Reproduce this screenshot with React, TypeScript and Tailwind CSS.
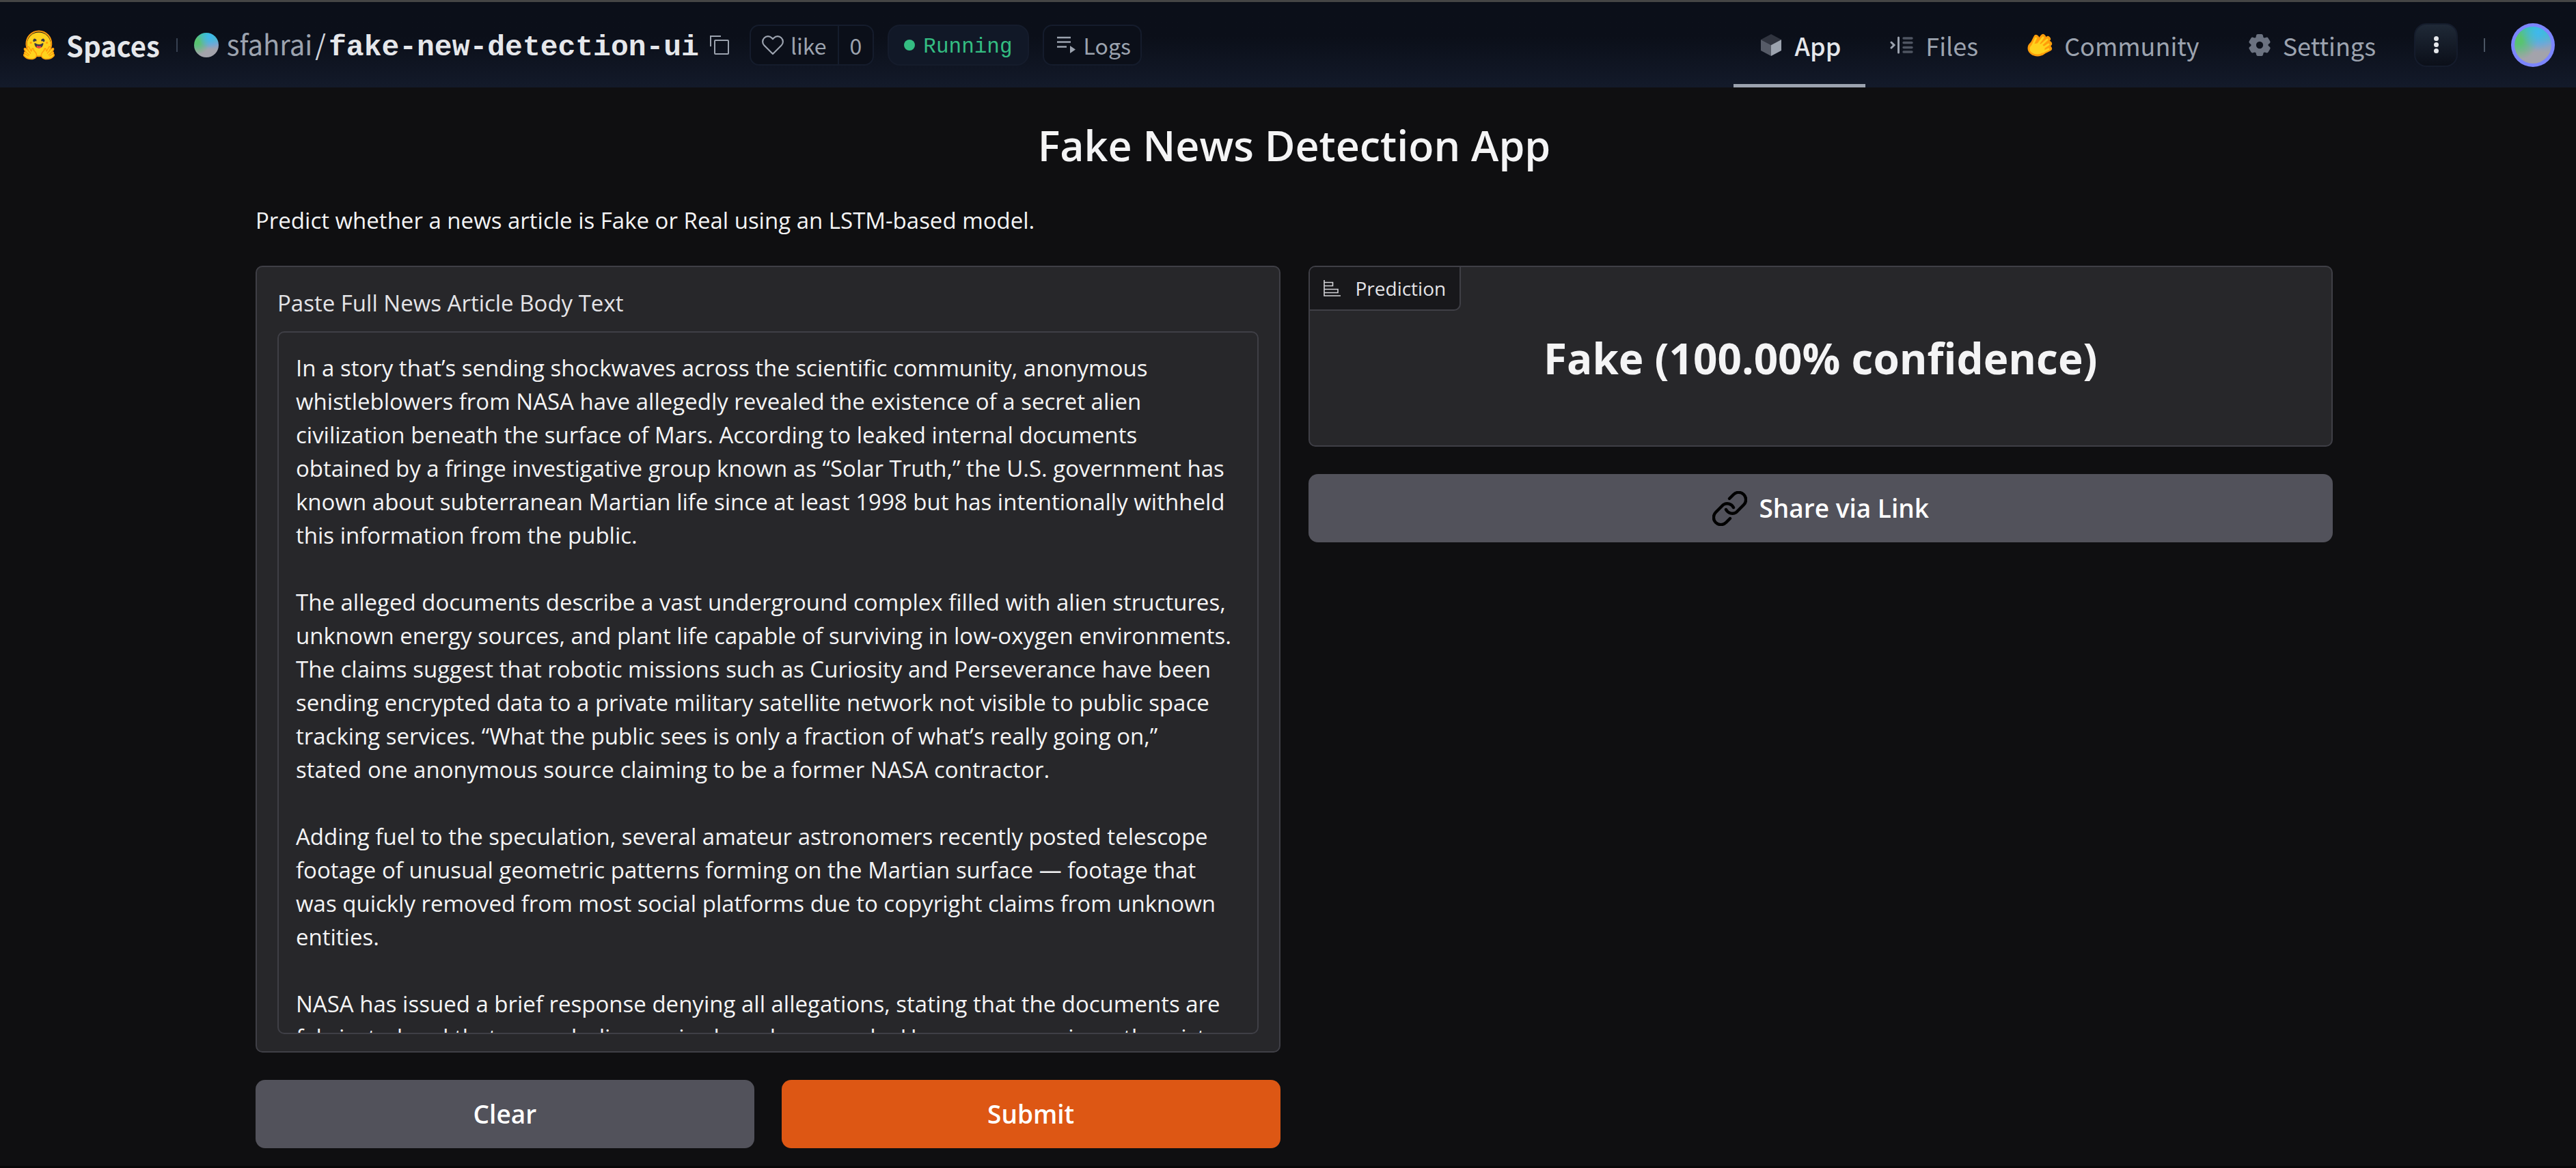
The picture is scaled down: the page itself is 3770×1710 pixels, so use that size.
import React from "react";

const article = `In a story that’s sending shockwaves across the scientific community, anonymous whistleblowers from NASA have allegedly revealed the existence of a secret alien civilization beneath the surface of Mars. According to leaked internal documents obtained by a fringe investigative group known as “Solar Truth,” the U.S. government has known about subterranean Martian life since at least 1998 but has intentionally withheld this information from the public.

The alleged documents describe a vast underground complex filled with alien structures, unknown energy sources, and plant life capable of surviving in low-oxygen environments. The claims suggest that robotic missions such as Curiosity and Perseverance have been sending encrypted data to a private military satellite network not visible to public space tracking services. “What the public sees is only a fraction of what’s really going on,”
stated one anonymous source claiming to be a former NASA contractor.

Adding fuel to the speculation, several amateur astronomers recently posted telescope footage of unusual geometric patterns forming on the Martian surface — footage that was quickly removed from most social platforms due to copyright claims from unknown entities.

NASA has issued a brief response denying all allegations, stating that the documents are fabricated and that no such discoveries have been made. However, conspiracy theorists remain unconvinced.`;

function HuggingLogo() {
  return (
    <svg viewBox="0 0 95 88" className="h-11 w-12" aria-hidden="true">
      <circle cx="47.2" cy="41.8" r="34.8" fill="#FFD21E" />
      <path d="M82 41.8a34.8 34.8 0 1 0-69.5 0 34.8 34.8 0 0 0 69.5 0Zm-73.5 0a38.8 38.8 0 1 1 77.5 0 38.8 38.8 0 0 1-77.5 0Z" fill="#FF9D0B" />
      <path d="M58.5 32.3c1.3.5 1.8 3.1 3.1 2.4a5 5 0 1 0-6.8-2c.6 1.1 2.5-.8 3.7-.4ZM35.9 32.3c-1.2.5-1.7 3.1-3 2.4a5 5 0 1 1 6.8-2c-.6 1.1-2.6-.8-3.8-.4Z" fill="#3A3B45" />
      <path d="M47.3 53c9.8 0 13-8.8 13-13.3 0-2.3-1.6-1.6-4.1-.3-2.4 1.1-5.5 2.7-8.9 2.7-7.1 0-13-6.9-13-2.4S37.4 53 47.3 53Z" fill="#3A3B45" />
      <path d="M39.5 50.2a8.7 8.7 0 0 1 5.3-4.5c.4-.1.8.6 1.2 1.3.4.7.8 1.3 1.2 1.3.5 0 .9-.6 1.3-1.3.4-.7.9-1.3 1.3-1.2a8.6 8.6 0 0 1 5 4.2C52.2 52.3 49.8 53 47.3 53c-3.1 0-5.7-.9-7.8-2.8Z" fill="#F94040" />
      <circle cx="70.7" cy="37" r="3.2" fill="#FF9D0B" />
      <circle cx="23.8" cy="37" r="3.2" fill="#FF9D0B" />
      <g fill="#FFD21E" stroke="#FF9D0B" strokeWidth="3" strokeLinejoin="round" strokeLinecap="round">
        <path d="M18 49c-3-1-5 1-4 5l3 7-8-7c-3-2-6 0-4 4l4 6c-3-1-5 1-4 4l1 2c-3 0-4 3-2 6 6 7 15 10 25 9 9-1 13-8 11-15-2-5-6-8-8-11 1-5-3-7-5-3l-2 6-7-13Z" />
        <path d="M77 49c3-1 5 1 4 5l-3 7 8-7c3-2 6 0 4 4l-4 6c3-1 5 1 4 4l-1 2c3 0 4 3 2 6-6 7-15 10-25 9-9-1-13-8-11-15 2-5 6-8 8-11-1-5 3-7 5-3l2 6 7-13Z" />
      </g>
      <path d="m17 61 6 7M9 64l10 9M7 70l9 6M78 61l-6 7M86 64l-10 9M88 70l-9 6" stroke="#FF9D0B" strokeWidth="2.5" strokeLinecap="round" fill="none" />
    </svg>
  );
}

function HandIcon() {
  return (
    <svg viewBox="0 0 38 34" className="h-[34px] w-[38px]" strokeLinecap="round" strokeLinejoin="round" aria-hidden="true">
      <g fill="#FF9D0B" stroke="#FF9D0B" strokeWidth="8">
        <ellipse cx="15" cy="21.5" rx="10.5" ry="8" />
        <path d="M8 16l5-10M15 15l8-10M20 18l10-10M24 21l8-6M24 26l8-4" />
      </g>
      <g fill="#FFD21E" stroke="#FFD21E" strokeWidth="3">
        <ellipse cx="14.5" cy="22.5" rx="9.5" ry="6.5" />
        <path d="M7 19l5.500-12M14 18l9-12M18 19l11-10M22 22l9-6M23 27l8-4" />
      </g>
    </svg>
  );
}

function CopyIcon() {
  return (
    <svg viewBox="0 0 28 28" className="size-7" fill="none" stroke="#9ca3af" strokeWidth="2" aria-hidden="true">
      <path d="M1 16V1h15" />
      <rect x="7" y="7" width="20" height="20" rx="1" />
    </svg>
  );
}

function HeartIcon() {
  return (
    <svg viewBox="0 0 32 30" className="h-[30px] w-8" fill="none" stroke="#9ca3af" strokeWidth="2.2" strokeLinejoin="round" aria-hidden="true">
      <path d="M16 28 3.500 15.500a7.600 7.600 0 0 1 0-11 7.600 7.600 0 0 1 10.900 0L16 6.200l1.600-1.700a7.600 7.600 0 0 1 10.900 0 7.600 7.600 0 0 1 0 11L16 28Z" />
    </svg>
  );
}

function LogsIcon() {
  return (
    <svg viewBox="0 0 28 26" className="h-[26px] w-7" aria-hidden="true">
      <path d="M1 2h20M1 8.500h20M1 15.500h14" stroke="#9ca3af" strokeWidth="2.4" fill="none" />
      <path d="M20 14v11l8-5.500-8-5.500Z" fill="#9ca3af" />
    </svg>
  );
}

function CubeIcon() {
  return (
    <svg viewBox="0 0 30 32" className="h-8 w-[30px]" aria-hidden="true">
      <path d="M15 0 30 8 15 16 0 8 15 0Z" fill="#30343f" />
      <path d="M0 8l15 8v16L0 24V8Z" fill="#565b67" />
      <path d="M30 8l-15 8v16l15-8V8Z" fill="#9ca3af" />
    </svg>
  );
}

function FilesIcon() {
  return (
    <svg viewBox="0 0 34 26" className="h-[26px] w-[34px]" fill="none" strokeLinecap="round" aria-hidden="true">
      <path d="M2 9l4 4-4 4" stroke="#9ca3af" strokeWidth="3" />
      <path d="M12.500 2v22" stroke="#9ca3af" strokeWidth="3" />
      <path d="M20 3h12M20 9.500h12M20 16.500h12M20 23h12" stroke="#4f5562" strokeWidth="3.4" />
    </svg>
  );
}

function GearIcon() {
  return (
    <svg viewBox="2 2 28 28" className="size-8" aria-hidden="true">
      <path
        d="M27 16.76v-1.53l1.92-1.68a2 2 0 0 0 .36-2.55l-2.36-4a2 2 0 0 0-1.73-1 2 2 0 0 0-.64.1l-2.43.82a11.35 11.35 0 0 0-1.31-.75l-.51-2.52a2 2 0 0 0-2-1.61h-4.68a2 2 0 0 0-2 1.61l-.51 2.52a11.48 11.48 0 0 0-1.32.75l-2.38-.86a2 2 0 0 0-.64-.06 2 2 0 0 0-1.73 1l-2.36 4a2 2 0 0 0 .41 2.51L5 15.24v1.53l-1.89 1.68a2 2 0 0 0-.39 2.55l2.36 4a2 2 0 0 0 1.73 1 2 2 0 0 0 .64-.1l2.43-.82a11.35 11.35 0 0 0 1.31.75l.51 2.52a2 2 0 0 0 2 1.61h4.72a2 2 0 0 0 2-1.61l.51-2.52a11.48 11.48 0 0 0 1.32-.75l2.42.82a2 2 0 0 0 .64.1 2 2 0 0 0 1.73-1l2.28-4a2 2 0 0 0-.41-2.51ZM16 20.5a4.5 4.5 0 1 1 0-9 4.5 4.5 0 0 1 0 9Z"
        fill="#6b7280"
      />
    </svg>
  );
}

function ChartIcon() {
  return (
    <svg viewBox="0 0 25 24" className="h-6 w-[25px]" fill="none" stroke="#d4d4d8" strokeWidth="1.6" aria-hidden="true">
      <path d="M1 0v23h24" />
      <path d="M1 3.500h12.500v5H1M1 13.500h20v5H1" />
    </svg>
  );
}

function LinkIcon() {
  return (
    <svg viewBox="0 0 51 51" className="size-[51px]" fill="none" stroke="#000" strokeWidth="4.4" strokeLinecap="round" aria-hidden="true">
      <path d="M25 11l6-6a10.500 10.500 0 0 1 15 15L35 31a10.500 10.500 0 0 1-15-4" />
      <path d="M26 40l-6 6A10.500 10.500 0 0 1 5 31l11-11a10.500 10.500 0 0 1 15 4" />
    </svg>
  );
}

const sphere =
  "bg-[radial-gradient(circle_at_65%_15%,#3fb8ee_0%,transparent_45%),radial-gradient(circle_at_12%_38%,#58c470_8%,transparent_48%),linear-gradient(180deg,#2cc9b0_0%,#7fa3cf_45%,#a3a3ab_70%)]";

export default function App() {
  return (
    <div className="flex min-h-screen flex-col border-b-3 border-[#070708] bg-[#0f0f11] font-['Open_Sans',sans-serif] text-[#f4f4f5]">
      <header className="flex h-32 items-stretch justify-between border-t-3 border-[#454545] bg-linear-to-b from-[#0b0f19] from-40% to-[#131a2a] pr-[31px] pl-[33px] font-['Noto_Sans_CJK_SC',sans-serif] text-[#9ca3af]">
        <div className="flex items-center">
          <a href="#spaces" className="flex items-center gap-4 text-[40px] font-bold text-[#e5e7eb]">
            <HuggingLogo />
            Spaces
          </a>
          <span className="mr-6 ml-6 h-5 w-0.5 bg-[#374151]" />
          <span className={`mr-3 size-9 rounded-full ${sphere}`} />
          <h1 className="flex items-baseline pt-1.5 text-[40px]">
            <a href="#owner">sfahrai</a>
            <span className="mx-1 text-[#d1d5db]">/</span>
            <a href="#space" className="font-['Liberation_Mono',monospace] text-[43px] font-bold text-[#e5e7eb]">
              fake-new-detection-ui
            </a>
          </h1>
          <button type="button" aria-label="Copy" className="mr-[30px] ml-4">
            <CopyIcon />
          </button>
          <div className="mr-5 flex h-[60px] items-stretch rounded-[14px] border-2 border-[#151c2c] bg-[#0b0f19] text-[32px]">
            <button type="button" className="flex items-center gap-2.5 border-r-2 border-[#151c2c] px-4">
              <HeartIcon />
              like
            </button>
            <button type="button" className="px-4">0</button>
          </div>
          <button type="button" className="mr-5 flex h-[60px] items-center gap-3 rounded-[18px] border-2 border-[#151c2c] bg-[#111827] px-[22px] font-['Liberation_Mono',monospace] text-[31px] text-[#34bd82]">
            <span className="size-4 rounded-full bg-[#34bd82]" />
            <span className="pt-2">Running</span>
          </button>
          <button type="button" className="flex h-[60px] items-center gap-3 rounded-[14px] border-2 border-[#151c2c] bg-[#0b0f19] pr-[14px] pl-[18px] text-[32px]">
            <LogsIcon />
            Logs
          </button>
        </div>
        <nav className="flex items-stretch text-[36px]">
          <a href="#app" className="flex items-center gap-5 border-y-5 border-t-transparent border-b-[#9ca3af] pr-9 pl-10 font-medium text-[#e5e7eb]">
            <CubeIcon />
            App
          </a>
          <a href="#files" className="flex items-center gap-[18px] px-9">
            <FilesIcon />
            Files
          </a>
          <a href="#community" className="flex items-center gap-4 px-9">
            <HandIcon />
            Community
          </a>
          <a href="#settings" className="flex items-center gap-[18px] px-9">
            <GearIcon />
            Settings
          </a>
          <div className="flex items-center pl-5">
            <button type="button" aria-label="More" className="flex size-16 flex-col items-center justify-center gap-0.5 rounded-[18px] border-2 border-[#151c2c] bg-linear-to-b from-[#1f2937] to-[#0b0f19]">
              <span className="size-[7px] rounded-full bg-[#e5e7eb]" />
              <span className="size-[7px] rounded-full bg-[#e5e7eb]" />
              <span className="size-[7px] rounded-full bg-[#e5e7eb]" />
            </button>
            <span className="mx-[38px] h-5 w-0.5 bg-[#4b5563]" />
            <button type="button" aria-label="Account" className="size-16 rounded-full bg-[#7c86ff] p-[5px]">
              <span className={`block size-full rounded-full ${sphere}`} />
            </button>
          </div>
        </nav>
      </header>

      <main className="flex flex-col pt-[38px] pr-[356px] pl-[374px]">
        <h2 className="text-center text-[61px] leading-[94px] font-semibold">Fake News Detection App</h2>
        <p className="mt-[38px] text-[33px] leading-[49px]">
          Predict whether a news article is Fake or Real using an LSTM-based model.
        </p>
        <div className="mt-[42px] grid grid-cols-2 items-start gap-[41px]">
          <section className="flex flex-col gap-10">
            <div className="flex flex-col rounded-[10px] border-2 border-[#3f3f46] bg-[#27272a] px-[30px] pt-7 pb-[25px]">
              <label htmlFor="article" className="text-[33px] leading-[49px] text-[#e4e4e7]">
                Paste Full News Article Body Text
              </label>
              <textarea
                id="article"
                defaultValue={article}
                className="mt-[17px] block h-[1029px] resize-none overflow-hidden rounded-[10px] border-2 border-[#3f3f46] bg-transparent py-[27px] pr-[34px] pl-[25px] text-[33px] leading-[49px]"
              />
            </div>
            <div className="grid grid-cols-2 gap-10 text-[37px] font-semibold text-white">
              <button type="button" className="h-25 rounded-[14px] bg-[#52525b]">Clear</button>
              <button type="button" className="h-25 rounded-[14px] bg-[#dd5714]">Submit</button>
            </div>
          </section>
          <section className="flex flex-col gap-10">
            <div className="flex h-[265px] flex-col rounded-[10px] border-2 border-[#3f3f46] bg-[#27272a]">
              <div className="flex h-16 items-center gap-[22px] self-start rounded-tl-lg rounded-br-[10px] border-r-2 border-b-2 border-[#3f3f46] bg-[#18181b] px-5 text-[28px] text-[#e4e4e7]">
                <ChartIcon />
                Prediction
              </div>
              <output className="mt-[22px] text-center text-[62px] leading-[94px] font-bold">Fake (100.00% confidence)</output>
            </div>
            <button type="button" className="flex h-25 items-center justify-center gap-[18px] rounded-[14px] bg-[#52525b] text-[37px] font-semibold text-white">
              <LinkIcon />
              Share via Link
            </button>
          </section>
        </div>
      </main>
    </div>
  );
}
